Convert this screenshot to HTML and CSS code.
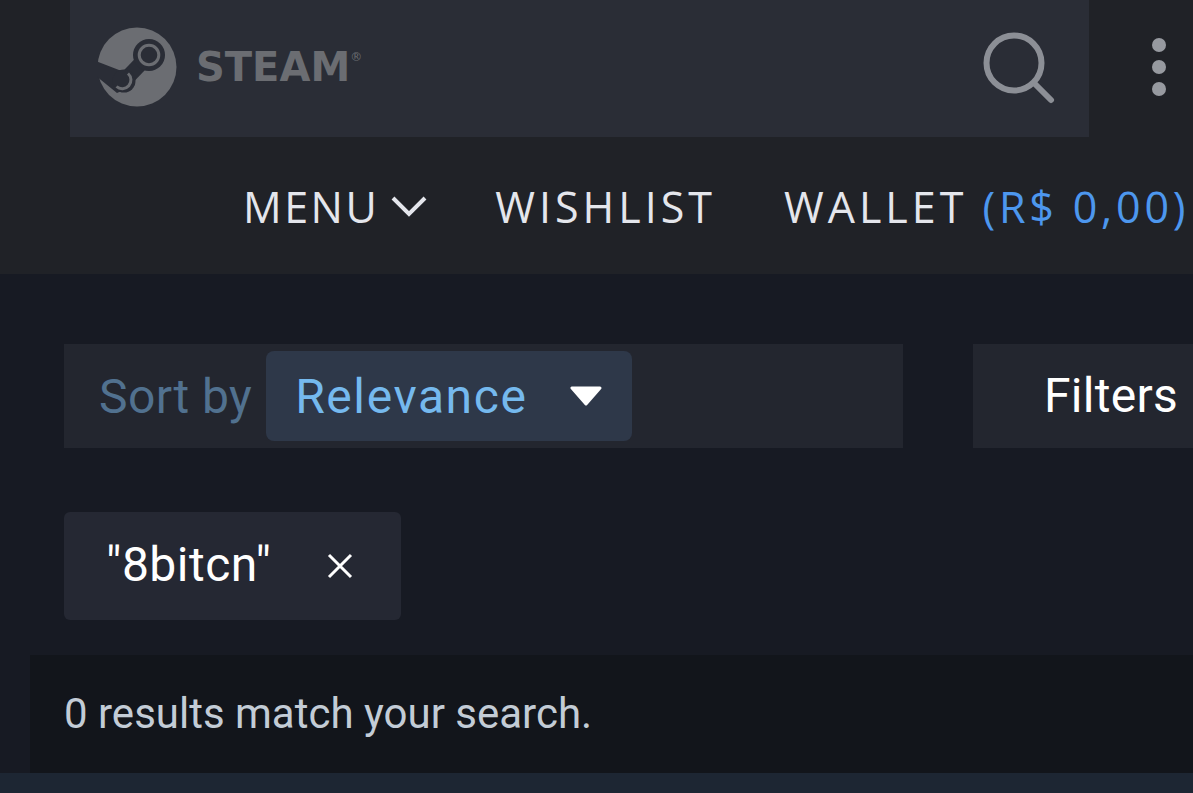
FILE: index.html
```html
<!DOCTYPE html>
<html>
<head>
  <title>Steam search</title>
  <link rel="stylesheet" href="styles.css">
</head>
<body>

  <!-- Header -->
  <div class="top">
    <div class="top-row">
      <div class="bar">
        <div class="logo">
          <svg class="logo-mark" viewBox="0 0 80 80" width="80" height="80">
            <circle cx="40" cy="40" r="39.500" fill="#6b6d72"/>
            <path d="M-1 34 L22 43 L34 44 L38 58 L20 66 L-1 49 Z" fill="#2a2d36"/>
            <path d="M52 28 L27 54" stroke="#2a2d36" stroke-width="15" fill="none"/>
            <circle cx="52" cy="28" r="16" fill="#2a2d36"/>
            <circle cx="27" cy="54" r="11.500" fill="#2a2d36"/>
            <circle cx="52" cy="28" r="9.800" fill="none" stroke="#6b6d72" stroke-width="3"/>
            <path d="M31 46.500 A8.500 8.500 0 1 1 19.500 59.500" fill="none" stroke="#6b6d72" stroke-width="3"/>
          </svg>
          <span class="logo-text">STEAM<sup>®</sup></span>
        </div>
        <svg class="search" viewBox="0 0 72 72" width="72" height="72">
          <circle cx="31" cy="31" r="27.500" fill="none" stroke="#8c8f96" stroke-width="6"/>
          <path d="M51 51 L68 68" fill="none" stroke="#8c8f96" stroke-width="6" stroke-linecap="round"/>
        </svg>
      </div>
      <div class="dots"><i></i><i></i><i></i></div>
    </div>
    <div class="nav">
      <span class="nav-menu">MENU<svg class="chev" viewBox="0 0 36 22" width="36" height="22"><path d="M2 3 L18 19 L34 3" fill="none" stroke="#e4e6ec" stroke-width="4"/></svg></span>
      <span>WISHLIST</span>
      <span class="wallet">WALLET <b>(R$ 0,00)</b></span>
    </div>
  </div>

  <!-- Sort and filters -->
  <div class="main">
    <div class="tools">
      <div class="sort">
        <span class="sort-label">Sort by</span>
        <div class="select">
          <span>Relevance</span>
          <svg viewBox="0 0 34 20" width="34" height="20"><path d="M3 2 H31 L17 18 Z" fill="#fff" stroke="#fff" stroke-width="3" stroke-linejoin="round"/></svg>
        </div>
      </div>
      <div class="filters">Filters</div>
    </div>

    <div class="chip">
      <span>"8bitcn"</span>
      <svg viewBox="0 0 28 28" width="28" height="28"><path d="M3 3 L25 25 M25 3 L3 25" fill="none" stroke="#fff" stroke-width="3"/></svg>
    </div>

    <div class="results">0 results match your search.</div>
  </div>

  <div class="bottom"></div>

</body>
</html>
```

FILE: styles.css
```css
html, body {
  margin: 0;
  height: 793px;
  overflow: hidden;
}

body {
  width: 1193px;
  background-color: #171a23;
  font-family: Roboto, sans-serif;
  display: flex;
  flex-direction: column;
}

.top {
  height: 274px;
  background-color: #202227;
  flex: none;
}

.top-row {
  height: 137px;
  padding-left: 70px;
  display: flex;
}

.bar {
  width: 1019px;
  height: 137px;
  background-color: #2a2d36;
  display: flex;
  align-items: center;
  justify-content: space-between;
  padding: 0 34px 0 27px;
  box-sizing: border-box;
}

.logo {
  display: flex;
  align-items: center;
  gap: 19px;
  color: #6b6d72;
  margin-top: -3px;
}

.logo-text {
  font-family: "DejaVu Sans", sans-serif;
  font-weight: 700;
  font-size: 40px;
  line-height: 1;
}

.logo-text sup {
  font-size: 12px;
  font-weight: 400;
  vertical-align: 20px;
  line-height: 0;
}

.search {
  margin-top: -2px;
}

.dots {
  margin-left: 63px;
  padding-top: 38px;
  display: flex;
  flex-direction: column;
  gap: 8px;
}

.dots i {
  display: block;
  width: 14px;
  height: 14px;
  border-radius: 50%;
  background-color: #979aa0;
}

.nav {
  height: 137px;
  display: flex;
  align-items: center;
  gap: 68px;
  padding: 2px 0 0 243px;
  box-sizing: border-box;
  font-family: "Open Sans", sans-serif;
  font-size: 43px;
  letter-spacing: 4px;
  color: #e4e6ec;
  white-space: nowrap;
  overflow: hidden;
}

.nav-menu {
  letter-spacing: 2.500px;
}

.chev {
  margin-left: 12px;
  vertical-align: 6px;
}

.wallet b {
  font-weight: 400;
  letter-spacing: 3.800px;
  color: #4d97ee;
}

.main {
  flex: 1;
  padding-top: 70px;
  min-height: 0;
}

.tools {
  display: flex;
  padding-left: 64px;
  gap: 70px;
}

.sort {
  width: 839px;
  height: 104px;
  background-color: #23262f;
  display: flex;
  align-items: center;
  padding-left: 35px;
  box-sizing: border-box;
}

.sort-label {
  font-size: 48px;
  letter-spacing: 0.400px;
  color: #51718f;
  margin-right: 14px;
}

.select {
  width: 366px;
  height: 90px;
  background-color: #2e3849;
  border-radius: 8px;
  display: flex;
  align-items: center;
  justify-content: space-between;
  padding: 0 29px 0 29px;
  box-sizing: border-box;
  font-size: 48px;
  letter-spacing: 1.600px;
  color: #75b9ee;
}

.filters {
  width: 220px;
  height: 104px;
  background-color: #23262f;
  color: #fff;
  font-size: 48px;
  letter-spacing: 0.300px;
  line-height: 104px;
  padding-left: 71px;
  box-sizing: border-box;
}

.chip {
  margin: 64px 0 0 64px;
  width: 337px;
  height: 108px;
  background-color: #252833;
  border-radius: 6px;
  display: flex;
  align-items: center;
  gap: 55px;
  padding-left: 42px;
  box-sizing: border-box;
  color: #fff;
  font-size: 48px;
  letter-spacing: 0.500px;
}

.chip span {
  margin-top: -3px;
}

.results {
  margin: 35px 0 0 30px;
  height: 118px;
  background-color: #12151b;
  color: #c3ccd6;
  font-size: 42px;
  line-height: 118px;
  padding-left: 34px;
}

.bottom {
  height: 20px;
  flex: none;
  background-color: #1d2633;
}
```
